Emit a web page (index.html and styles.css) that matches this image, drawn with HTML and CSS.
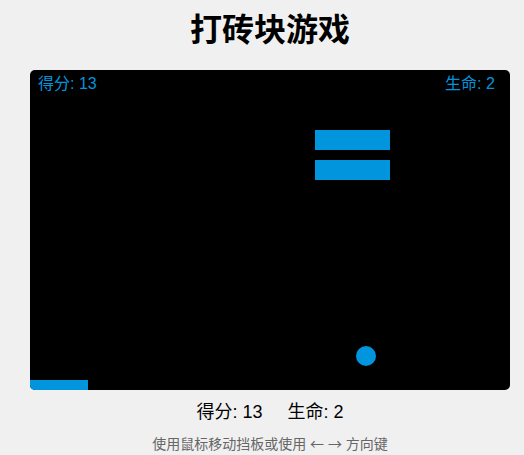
FILE: index.html
```html
<!DOCTYPE html>
<html lang="zh">
<head>
<meta charset="utf-8">
<title>打砖块游戏</title>
<link rel="stylesheet" href="styles.css">
</head>
<body>
<main class="page">
  <h1 class="title">打砖块游戏</h1>
  <div class="board">
    <span class="hud hud-score">得分: 13</span>
    <span class="hud hud-lives">生命: 2</span>
    <div class="brick" style="left:285px;top:60px"></div>
    <div class="brick" style="left:285px;top:90px"></div>
    <div class="ball" style="left:326px;top:276px"></div>
    <div class="paddle" style="left:0;"></div>
  </div>
  <div class="status"><span class="stat">得分: 13</span><span class="stat">生命: 2</span></div>
  <p class="hint">使用鼠标移动挡板或使用 <span class="arrow">←</span> <span class="arrow">→</span> 方向键</p>
</main>
</body>
</html>
```
FILE: styles.css
```css
html, body {
  margin: 0;
  background: #f0f0f0;
}
body {
  padding-left: 16px;
  font-family: "Liberation Sans", Arial, "Noto Sans CJK SC", sans-serif;
  color: #000;
}
.page {
  display: flex;
  flex-direction: column;
  align-items: center;
}
.title {
  margin: 10px 0 20px;
  font-size: 32px;
  line-height: 40px;
  font-weight: bold;
}
.board {
  position: relative;
  width: 480px;
  height: 320px;
  background: #000;
  border-radius: 5px;
  overflow: hidden;
}
.hud {
  position: absolute;
  top: 5px;
  font-size: 16px;
  line-height: 18px;
  color: #0095dd;
}
.hud-score { left: 8px; }
.hud-lives { left: 415px; }
.brick {
  position: absolute;
  width: 75px;
  height: 20px;
  background: #0095dd;
}
.ball {
  position: absolute;
  width: 20px;
  height: 20px;
  border-radius: 50%;
  background: #0095dd;
}
.paddle {
  position: absolute;
  bottom: 0;
  width: 58px;
  height: 10px;
  background: #0095dd;
}
.status {
  margin-top: 11px;
  font-size: 18px;
  line-height: 22px;
  display: flex;
  gap: 25px;
}
.hint {
  margin: 10px 0 0;
  font-size: 14px;
  line-height: 20px;
  color: #666;
}
.arrow {
  font-family: "Noto Sans CJK SC", sans-serif;
}
```
